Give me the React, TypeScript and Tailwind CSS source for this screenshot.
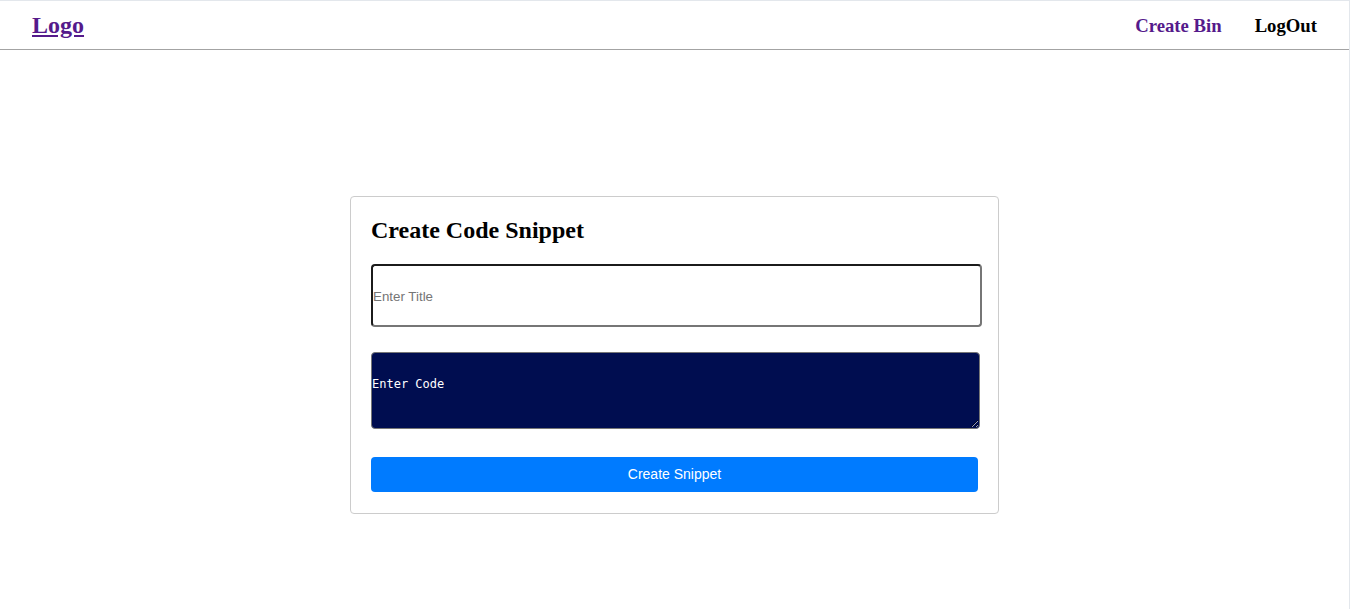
import React, { useState } from 'react';

const App: React.FC = () => {
  const [title, setTitle] = useState('');
  const [code, setCode] = useState('');

  return (
    <div className="h-[609px] w-[1350px] bg-white border-t border-r border-[#e3e7ec] font-['Liberation_Serif',serif] overflow-hidden">
      <header className="h-[49px] flex items-center justify-between pl-[32px] pr-[32px] border-b border-[#a3a3a3]">
        <a href="#" className="text-[24px] font-bold text-[#551a8b] underline leading-none">Logo</a>
        <nav className="flex items-center gap-[33px] text-[18.72px] font-bold leading-none pt-[3px]">
          <a href="#" className="text-[#551a8b]">Create Bin</a>
          <a href="#" className="text-black">LogOut</a>
        </nav>
      </header>

      <div className="flex justify-center pt-[146px]">
        <div className="w-[649px] border border-[#cccccc] rounded-[4px] p-[20px] pb-[21px]">
          <h2 className="text-[24px] font-bold leading-[26px] text-black mb-[21px]">Create Code Snippet</h2>

          <input
            value={title}
            onChange={e => setTitle(e.target.value)}
            placeholder="Enter Title"
            className="block w-[611px] h-[63px] border-2 border-[#1b1b1b] border-r-[#767676] border-b-[#767676] rounded-[4px] px-0 pt-[2px] text-[13.33px] font-['Liberation_Sans',sans-serif] placeholder:text-[#757575] outline-none"
          />

          <textarea
            value={code}
            onChange={e => setCode(e.target.value)}
            placeholder="Enter Code"
            className="block mt-[25px] w-[609px] h-[77px] bg-[#000d50] border border-[#767676] rounded-[4px] pt-[22px] px-0 text-[12px] text-white font-['DejaVu_Sans_Mono',monospace] placeholder:text-white outline-none"
          />

          <button className="mt-[28px] w-[607px] h-[35px] bg-[#007bff] rounded-[4px] text-white text-[14px] font-['Liberation_Sans',sans-serif]">
            Create Snippet
          </button>
        </div>
      </div>
    </div>
  );
};

export default App;
